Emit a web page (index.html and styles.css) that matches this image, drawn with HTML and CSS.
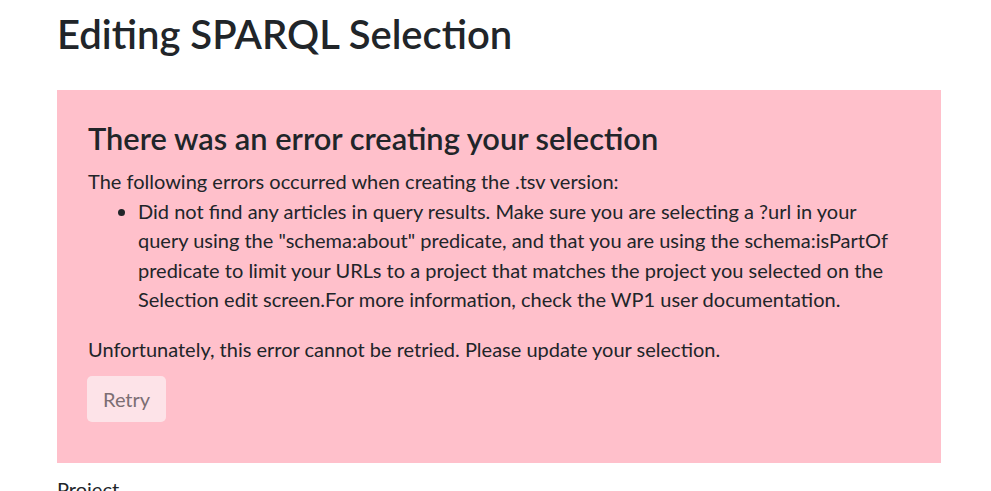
FILE: index.html
```html
<!DOCTYPE html>
<html>
<head>
<meta charset="utf-8">
<link rel="stylesheet" href="styles.css">
</head>
<body>
<div class="page">
  <h1 class="title">Editing SPARQL Selection</h1>
  <div class="error-box">
    <h3 class="error-title">There was an error creating your selection</h3>
    <p class="intro">The following errors occurred when creating the .tsv version:</p>
    <ul class="errors">
      <li>Did not find any articles in query results. Make sure you are selecting a ?url in your query using the "schema:about" predicate, and that you are using the schema:isPartOf predicate to limit your URLs to a project that matches the project you selected on the Selection edit screen.For more information, check the WP1 user documentation.</li>
    </ul>
    <p class="note">Unfortunately, this error cannot be retried. Please update your selection.</p>
    <button class="retry" disabled>Retry</button>
  </div>
  <div class="field-label">Project</div>
</div>
</body>
</html>
```

FILE: styles.css
```css
html, body {
  margin: 0;
  padding: 0;
  background: #fff;
}
body {
  font-family: "Lato", "Open Sans", sans-serif;
  color: #212529;
  font-size: 20px;
  line-height: 29.5px;
}
.page {
  padding: 0 50px 0 57px;
}
.title {
  font-size: 40px;
  font-weight: 600;
  line-height: 1.2;
  margin: 0;
  padding-top: 9.5px;
  height: 90px;
  box-sizing: border-box;
}
.error-box {
  box-sizing: border-box;
  background: #ffc0cb;
  padding: 30.6px 30px 30px 31px;
  height: 373px;
}
.error-title {
  font-size: 30.8px;
  font-weight: 600;
  line-height: 1.2;
  margin: 0 0 9.6px 0;
}
.intro {
  margin: 0;
}
.errors {
  margin: 0 0 20.5px 0;
  padding-left: 50px;
}
.note {
  margin: 0 0 11px 0;
}
.retry {
  font-family: inherit;
  font-size: 20px;
  line-height: 1.5;
  padding: 0 16px;
  height: 46px;
  border: none;
  border-radius: 5px;
  background: #fde3e8;
  color: #7c6e73;
  margin-left: -1px;
}
.field-label {
  padding-top: 12px;
}
```
